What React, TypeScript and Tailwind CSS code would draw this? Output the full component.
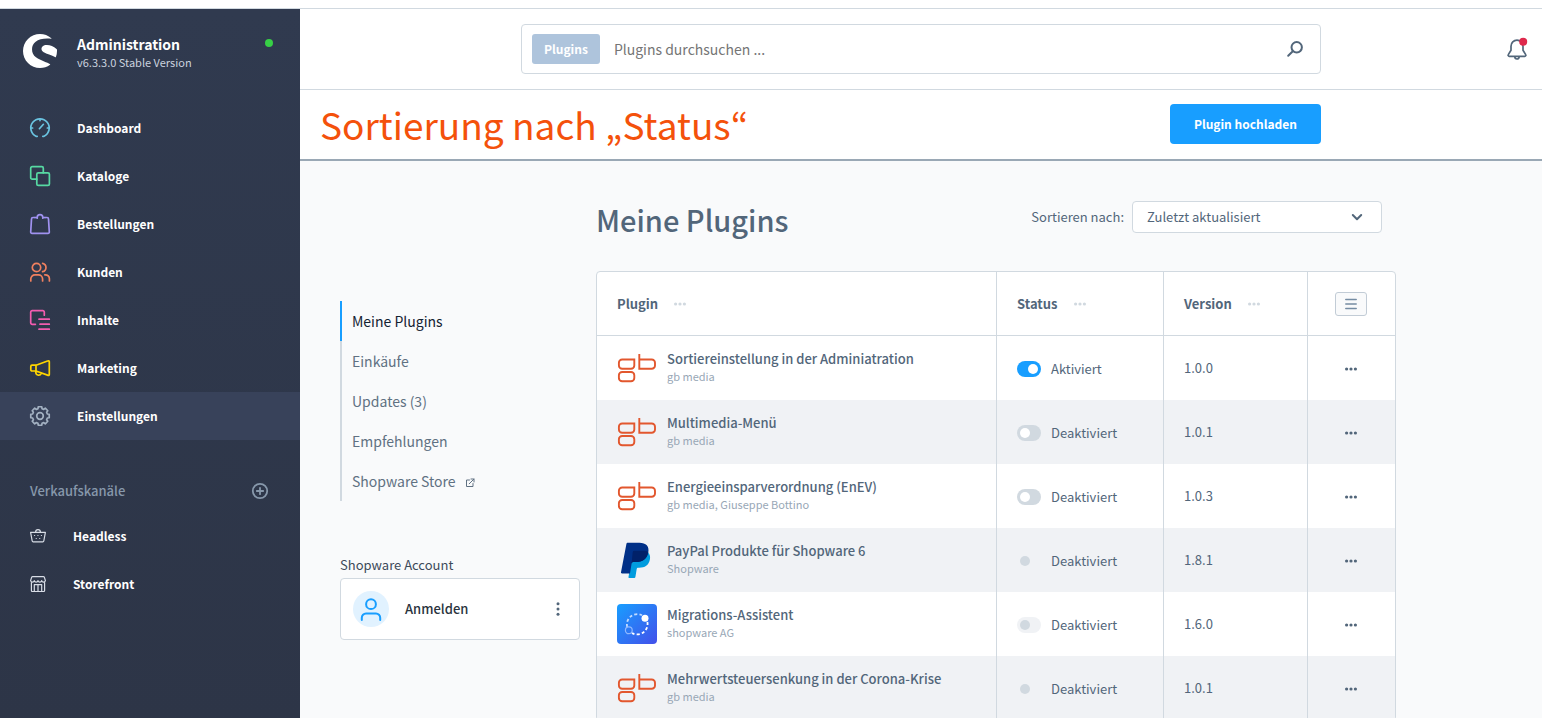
import type { ReactNode } from "react";
import { SiShopware } from "react-icons/si";

function Icon({
  size = 20,
  width = 1.7,
  className = "",
  children,
}: {
  size?: number;
  width?: number;
  className?: string;
  children: ReactNode;
}) {
  return (
    <svg
      width={size}
      height={size}
      viewBox={`0 0 ${size} ${size}`}
      fill="none"
      stroke="currentColor"
      strokeWidth={width}
      strokeLinecap="round"
      strokeLinejoin="round"
      className={`shrink-0 overflow-visible ${className}`}
      aria-hidden="true"
    >
      {children}
    </svg>
  );
}

/** Outline of the settings cog, eight teeth around the centre. */
function cogPath() {
  const teeth = 8;
  const points: string[] = [];
  for (let i = 0; i < teeth; i++) {
    const mid = (i / teeth) * Math.PI * 2;
    for (const [offset, r] of [
      [-0.27, 7.6],
      [-0.19, 9.4],
      [0.19, 9.4],
      [0.27, 7.6],
    ]) {
      const x = 10 + Math.sin(mid + offset) * r;
      const y = 10 - Math.cos(mid + offset) * r;
      points.push(`${x.toFixed(2)},${y.toFixed(2)}`);
    }
  }
  return `M${points.join("L")}Z`;
}

const NAV = [
  {
    label: "Dashboard",
    color: "text-[#6ac3e0]",
    icon: (
      <>
        <path d="M7.2 18.3H6a9.2 9.2 0 1 1 8 0h-1.2" />
        <path d="M10 1v1.6M1 10h1.6M17.4 10H19M9.4 10.7l4-4.4" />
      </>
    ),
  },
  {
    label: "Kataloge",
    color: "text-[#57d9a3]",
    icon: (
      <>
        <rect x="6.8" y="6.8" width="12.6" height="12.6" rx="1.5" />
        <path d="M6.8 13.2H2.2a1.5 1.5 0 0 1-1.5-1.5V2.2A1.5 1.5 0 0 1 2.2.7h9.6a1.5 1.5 0 0 1 1.5 1.5v4.6" />
      </>
    ),
  },
  {
    label: "Bestellungen",
    color: "text-[#a092f0]",
    icon: (
      <>
        <path d="M5 3.5H3A1.5 1.5 0 0 0 1.5 5L.7 18a1.3 1.3 0 0 0 1.3 1.4h16a1.3 1.3 0 0 0 1.3-1.4L18.5 5A1.5 1.5 0 0 0 17 3.5h-2" />
        <path d="M7.2 4.2v-.7a2.8 2.8 0 0 1 5.6 0v.7M5 3.5h2.2M12.8 3.5H15" />
      </>
    ),
  },
  {
    label: "Kunden",
    color: "text-[#f0805f]",
    icon: (
      <>
        <circle cx="6.5" cy="5.5" r="4.2" />
        <path d="M12.6 1.3a4.3 4.3 0 0 1 0 8.4M.8 19v-2a4.2 4.2 0 0 1 4.2-4.2h3.4a4.2 4.2 0 0 1 4.2 4.2v2M14.8 12.8h.6a4 4 0 0 1 4 4V19" />
      </>
    ),
  },
  {
    label: "Inhalte",
    color: "text-[#f45cb0]",
    icon: (
      <path d="M5.4 14.3H2.2a1.5 1.5 0 0 1-1.5-1.5V2.2A1.5 1.5 0 0 1 2.2.7h10.6a1.5 1.5 0 0 1 1.5 1.5v3M9 9.2h10.3M10 14.2h9.3M9 19.2h10.3" />
    ),
  },
  {
    label: "Marketing",
    color: "text-[#ffd500]",
    icon: (
      <path d="M6 7.2H2A1.2 1.2 0 0 0 .8 8.4v3.4A1.2 1.2 0 0 0 2 13h4zM6 7.2l12.2-4.4a.8.8 0 0 1 1.1.8v13a.8.8 0 0 1-1.1.8L6 13M5.8 13.2v1.6a2.8 2.8 0 0 0 5.4.6" />
    ),
  },
  {
    label: "Einstellungen",
    color: "text-[#a3b1c2]",
    active: true,
    icon: (
      <>
        <path d={cogPath()} />
        <circle cx="10" cy="10" r="3.3" />
      </>
    ),
  },
];

const CHANNELS = [
  {
    label: "Headless",
    icon: (
      <>
        <path d="M.6 4.4h14.8L13.8 13a1 1 0 0 1-1 .8H3.2a1 1 0 0 1-1-.8zM5.6 4.2V4a2.4 2.4 0 0 1 4.8 0v.2" />
        <path d="M4.5 7.5h.1M7.9 7.5h.1M11.4 7.5h.1M6.2 10.5h.1M9.7 10.5h.1" />
      </>
    ),
  },
  {
    label: "Storefront",
    icon: (
      <path d="M1.4 6.5v8.1a.9.9 0 0 0 .9.9h11.4a.9.9 0 0 0 .9-.9V6.5M.6 4.6 1.6 1.4A1.2 1.2 0 0 1 2.7.6h10.6a1.2 1.2 0 0 1 1.1.8l1 3.2a1.9 1.9 0 0 1-3.7 0 1.9 1.9 0 0 1-3.7 0 1.9 1.9 0 0 1-3.7 0 1.9 1.9 0 0 1-3.7 0zM4.3 15.4V8.7h7.4v6.7M8 8.7v6.7" />
    ),
  },
];

const SECTIONS = ["Meine Plugins", "Einkäufe", "Updates (3)", "Empfehlungen", "Shopware Store"];

type Plugin = {
  name: string;
  vendor: string;
  version: string;
  logo: "gb" | "paypal" | "migration";
  active?: boolean;
  locked?: boolean;
};

const PLUGINS: Plugin[] = [
  { name: "Sortiereinstellung in der Adminiatration", vendor: "gb media", version: "1.0.0", logo: "gb", active: true },
  { name: "Multimedia-Menü", vendor: "gb media", version: "1.0.1", logo: "gb" },
  { name: "Energieeinsparverordnung (EnEV)", vendor: "gb media, Giuseppe Bottino", version: "1.0.3", logo: "gb" },
  { name: "PayPal Produkte für Shopware 6", vendor: "Shopware", version: "1.8.1", logo: "paypal", locked: true },
  { name: "Migrations-Assistent", vendor: "shopware AG", version: "1.6.0", logo: "migration", locked: true },
  { name: "Mehrwertsteuersenkung in der Corona-Krise", vendor: "gb media", version: "1.0.1", logo: "gb", locked: true },
];

function GbLogo() {
  return (
    <svg width="40" height="40" viewBox="0 0 40 40" fill="none" stroke="#e2572e" strokeWidth="1.9" className="shrink-0" aria-hidden="true">
      <path d="M17.3 11.5H5.200a3.300 3.300 0 0 0-3.300 3.300v2.600a3.300 3.300 0 0 0 3.300 3.300h8.800a3.300 3.300 0 0 0 3.300-3.300z" />
      <rect x="1.9" y="24" width="15.4" height="9.3" rx="3.3" />
      <path d="M22.3 6v14.7h12.4a3.3 3.3 0 0 0 3.3-3.3v-2.6a3.3 3.3 0 0 0-3.3-3.3H22.3" />
    </svg>
  );
}

function PaypalLogo() {
  return (
    <svg width="40" height="40" viewBox="0 0 40 40" className="shrink-0" aria-hidden="true">
      <path fill="#009cde" d="M31 12.5c1.8 1.6 2.5 4 1.9 7-1.2 5.8-5 8.2-10.7 8.2h-1c-.8 0-1.3.5-1.5 1.3l-1.3 8c-.1.6-.5 1-1.1 1h-5c-.6 0-.9-.5-.8-1l2.3-14z" />
      <path fill="#003087" d="M9.4 3.9c.1-.7.7-1.2 1.4-1.2h11.6c6.7 0 10.2 3.6 8.9 9.9-1.4 6.9-5.9 9.5-12.6 9.5h-2.3c-.9 0-1.6.6-1.8 1.5l-1.6 9.8H5c-.7 0-1.1-.5-1-1.2z" />
      <path fill="#012169" d="M15.7 12.2c.1-.9.6-1.5 1.5-1.5h9.4c1.8 0 3.4.4 4.6 1.3-1.2 7.2-5.7 10.1-12.5 10.1h-2.3c-.9 0-1.6.6-1.8 1.5z" />
    </svg>
  );
}

function MigrationLogo() {
  return (
    <svg width="40" height="40" viewBox="0 0 40 40" fill="none" className="shrink-0" aria-hidden="true">
      <defs>
        <linearGradient id="migration" x1="0" y1="0" x2="1" y2="1">
          <stop offset="0" stopColor="#189eff" />
          <stop offset="1" stopColor="#4350ea" />
        </linearGradient>
      </defs>
      <rect width="40" height="40" rx="4" fill="url(#migration)" />
      <path d="M10.2 23A10.4 10.4 0 0 1 25 11.2" stroke="#c3dcff" strokeWidth="1.8" strokeDasharray="3 2.2" />
      <path d="M30.4 18A10.4 10.4 0 0 1 15 29" stroke="#fff" strokeWidth="1.8" strokeDasharray="3 2.2" />
      <circle cx="28" cy="14.3" r="3.5" fill="#fff" />
      <circle cx="11.8" cy="26.3" r="3.4" stroke="#8fb8ff" strokeWidth="1.2" />
    </svg>
  );
}

const LOGOS = { gb: GbLogo, paypal: PaypalLogo, migration: MigrationLogo };

function Dots({ vertical = false }: { vertical?: boolean }) {
  return (
    <svg
      width={vertical ? 4 : 12}
      height={vertical ? 14 : 4}
      viewBox={vertical ? "0 0 4 14" : "0 0 12 4"}
      fill="currentColor"
      aria-hidden="true"
    >
      {[0, 1, 2].map((i) =>
        vertical ? (
          <circle key={i} cx="2" cy={1.7 + i * 5.3} r="1.5" />
        ) : (
          <circle key={i} cx={1.6 + i * 4.4} cy="2" r="1.6" />
        )
      )}
    </svg>
  );
}

function Sidebar() {
  return (
    <aside className="flex w-[300px] shrink-0 flex-col bg-linear-to-b from-[#303a4f] to-[#2d3547] text-white">
      <div className="flex items-start pt-[25px] pr-[27px] pb-[34px] pl-[23px]">
        <SiShopware className="size-[34px]" aria-hidden="true" />
        <div className="ml-5 flex-1">
          <p className="text-sm leading-5 font-bold">Administration</p>
          <p className="text-[11px] leading-4 text-[#cbd3df]">v6.3.3.0 Stable Version</p>
        </div>
        <span className="mt-[5px] size-2 rounded-full bg-[#37d046]" />
      </div>

      <nav>
        {NAV.map((item) => (
          <a
            key={item.label}
            href="#"
            className={`flex h-12 items-center gap-[27px] pl-[30px] text-xs font-bold ${
              item.active ? "bg-[#38425a]" : ""
            }`}
          >
            <span className={item.color}>
              <Icon>{item.icon}</Icon>
            </span>
            {item.label}
          </a>
        ))}
      </nav>

      <div className="mt-[30px] flex h-[42px] items-center justify-between pr-8 pl-[30px] text-[#8798ab]">
        <h2 className="text-[13px] font-medium">Verkaufskanäle</h2>
        <button type="button" aria-label="Verkaufskanal hinzufügen">
          <Icon size={16} width={1.8}>
            <circle cx="8" cy="8" r="7.2" />
            <path d="M8 4.8v6.4M4.8 8h6.4" />
          </Icon>
        </button>
      </div>
      <nav>
        {CHANNELS.map((channel) => (
          <a
            key={channel.label}
            href="#"
            className="flex h-12 items-center gap-[27px] pl-[30px] text-xs font-bold"
          >
            <span className="text-[#d8dde6]">
              <Icon size={16} width={1.2}>
                {channel.icon}
              </Icon>
            </span>
            {channel.label}
          </a>
        ))}
      </nav>
    </aside>
  );
}

function TopBar() {
  return (
    <>
      <header className="grid h-[81px] grid-cols-[1fr_minmax(0,800px)_1fr] items-center border-b border-[#d1d9e0] bg-white">
        <form className="col-start-2 flex h-[50px] items-center rounded border border-[#d1d9e0] px-2.5">
          <span className="flex h-[30px] items-center rounded-[3px] bg-[#aec4dc] px-3 text-xs font-bold text-white">
            Plugins
          </span>
          <input
            type="search"
            aria-label="Plugins durchsuchen"
            placeholder="Plugins durchsuchen ..."
            className="min-w-0 flex-1 px-3.5 text-sm outline-none placeholder:text-[#757575]"
          />
          <button type="submit" aria-label="Suchen" className="mr-[7px] text-[#52667a]">
            <Icon size={16} width={2}>
              <circle cx="9.7" cy="6.3" r="5.2" />
              <path d="M5.8 10.2 1.2 14.8" />
            </Icon>
          </button>
        </form>
        <button
          type="button"
          aria-label="Benachrichtigungen"
          className="mr-[15px] justify-self-end text-[#52667a]"
        >
          <Icon>
            <path d="M10 1.2A6 6 0 0 0 4 7.2v4L1.3 15.6a1.1 1.1 0 0 0 .9 1.700h15.600a1.100 1.100 0 0 0 .9-1.700L16 11.200v-4a6 6 0 0 0-6-6zM7.800 17.800a2.200 2.200 0 0 0 4.400 0" />
            <circle cx="16.2" cy="2.8" r="4" fill="#de294c" stroke="none" />
          </Icon>
        </button>
      </header>

      <div className="grid h-[71px] grid-cols-[1fr_minmax(0,800px)_1fr] items-start border-b-2 border-[#9aa8b5] bg-white">
        <h1 className="col-span-2 col-start-1 row-start-1 pt-1.5 pl-5 text-[37px] leading-[56px] text-[#f4510b]">
          Sortierung nach „Status“
        </h1>
        <button
          type="button"
          className="col-start-2 row-start-1 mt-3.5 h-10 justify-self-end rounded bg-[#189eff] px-6 text-xs font-bold text-white"
        >
          Plugin hochladen
        </button>
      </div>
    </>
  );
}

function SectionNav() {
  return (
    <div className="w-[240px] shrink-0 pt-[140px]">
      <nav>
        {SECTIONS.map((section, i) => (
          <a
            key={section}
            href="#"
            className={`flex h-10 items-center gap-2.5 border-l-2 pl-2.5 text-sm ${
              i === 0 ? "border-[#189eff] text-[#142232]" : "border-[#d1d9e0] text-[#607182]"
            }`}
          >
            {section}
            {section === "Shopware Store" && (
              <Icon size={8} width={1} className="mt-1">
                <path d="M3.5 1H.5v6.5H7V4.5M5 0h3v3M8 0 3.2 4.8" />
              </Icon>
            )}
          </a>
        ))}
      </nav>

      <h3 className="mt-[52px] mb-0.5 text-[13px] leading-[23px] text-[#3d4a5a]">Shopware Account</h3>
      <div className="flex h-[62px] items-center rounded border border-[#d1d9e0] bg-white pr-[19px] pl-3">
        <span className="flex size-9 items-center justify-center rounded-full bg-[#e1f2ff] text-[#189eff]">
          <Icon size={22} width={2}>
            <circle cx="11" cy="6.2" r="4.9" />
            <path d="M1.800 22v-2.200A4.200 4.200 0 0 1 6 15.600h10a4.200 4.200 0 0 1 4.200 4.200V22" />
          </Icon>
        </span>
        <a href="#" className="ml-4 flex-1 text-[13px] font-medium text-[#29333d]">
          Anmelden
        </a>
        <button type="button" aria-label="Kontomenü" className="text-[#52667a]">
          <Dots vertical />
        </button>
      </div>
    </div>
  );
}

function ColumnHead({ children }: { children: string }) {
  return (
    <th scope="col" className="border-r border-[#d1d9e0] pl-5 text-left text-[13px] font-bold">
      <div className="flex items-center gap-4">
        {children}
        <span className="text-[#d1d9e0]">
          <Dots />
        </span>
      </div>
    </th>
  );
}

function PluginRow({ plugin }: { plugin: Plugin }) {
  const Logo = LOGOS[plugin.logo];
  return (
    <tr className="h-16 even:bg-[#f0f2f5]">
      <td className="border-r border-[#d1d9e0] pl-5">
        <div className="flex items-center gap-2.5">
          <Logo />
          <div className="pb-0.5">
            <p className="text-[13px] leading-[18px] font-medium">{plugin.name}</p>
            <p className="text-[11px] leading-4 text-[#98a7b6]">{plugin.vendor}</p>
          </div>
        </div>
      </td>
      <td className="border-r border-[#d1d9e0] pt-0.5 pl-5">
        <label className="flex items-center gap-2.5 text-[13px]">
          <input
            type="checkbox"
            defaultChecked={plugin.active}
            disabled={plugin.locked}
            className="flex h-4 w-6 appearance-none items-center rounded-full bg-[#d1d9e0] px-[3px] before:size-2.5 before:rounded-full before:bg-white checked:justify-end checked:bg-[#189eff] disabled:bg-[#f0f2f5] disabled:before:bg-[#d1d9e0]"
          />
          {plugin.active ? "Aktiviert" : "Deaktiviert"}
        </label>
      </td>
      <td className="border-r border-[#d1d9e0] pl-5 text-[13px]">{plugin.version}</td>
      <td className="pt-0.5 pr-0.5">
        <button
          type="button"
          aria-label={`Aktionen für ${plugin.name}`}
          className="mx-auto block text-[#52667a]"
        >
          <Dots />
        </button>
      </td>
    </tr>
  );
}

function PluginList() {
  return (
    <section className="w-full max-w-[800px]">
      <div className="flex h-[110px] items-start justify-between pr-3.5">
        <h2 className="pt-[34px] text-[29px] leading-[48px] font-medium">Meine Plugins</h2>
        <div className="flex items-center gap-2 pt-10 text-[13px]">
          <label htmlFor="sort">Sortieren nach:</label>
          <div className="relative w-[250px]">
            <select
              id="sort"
              className="h-8 w-full appearance-none rounded border border-[#d1d9e0] bg-white px-3.5 outline-none"
            >
              <option>Zuletzt aktualisiert</option>
            </select>
            <span className="pointer-events-none absolute top-3 right-5">
              <Icon size={10} width={2}>
                <path d="M.8 2 5 6.2 9.2 2" />
              </Icon>
            </span>
          </div>
        </div>
      </div>

      <div className="overflow-hidden rounded border border-[#d1d9e0] bg-white">
        <table className="w-full table-fixed border-separate border-spacing-0">
          <colgroup>
            <col />
            <col className="w-[167px]" />
            <col className="w-36" />
            <col className="w-[87px]" />
          </colgroup>
          <thead>
            <tr className="h-16 [&>th]:border-b">
              <ColumnHead>Plugin</ColumnHead>
              <ColumnHead>Status</ColumnHead>
              <ColumnHead>Version</ColumnHead>
              <th scope="col" className="border-[#d1d9e0] pr-0.5">
                <button
                  type="button"
                  aria-label="Spalten anpassen"
                  className="mx-auto flex h-6 w-8 items-center justify-center rounded-[3px] border border-[#c2ccd6] bg-[#f9fafb] text-[#758ca3]"
                >
                  <Icon size={12} width={1.5}>
                    <path d="M.8 1.5h10.4M.8 6h10.4M.8 10.5h10.4" />
                  </Icon>
                </button>
              </th>
            </tr>
          </thead>
          <tbody>
            {PLUGINS.map((plugin) => (
              <PluginRow key={plugin.name} plugin={plugin} />
            ))}
          </tbody>
        </table>
      </div>
    </section>
  );
}

export default function App() {
  return (
    <div
      lang="de"
      className="flex h-screen flex-col overflow-hidden bg-white pt-2 font-['Noto_Sans_CJK_KR',sans-serif] text-[#52667a]"
    >
      <div className="flex min-h-0 flex-1 border-t border-[#d1d9e0]">
        <Sidebar />
        <div className="flex min-w-0 flex-1 flex-col">
          <TopBar />
          <main className="flex min-h-0 flex-1 gap-4 overflow-hidden bg-[#f9fafb] px-10">
            <SectionNav />
            <PluginList />
          </main>
        </div>
      </div>
    </div>
  );
}
